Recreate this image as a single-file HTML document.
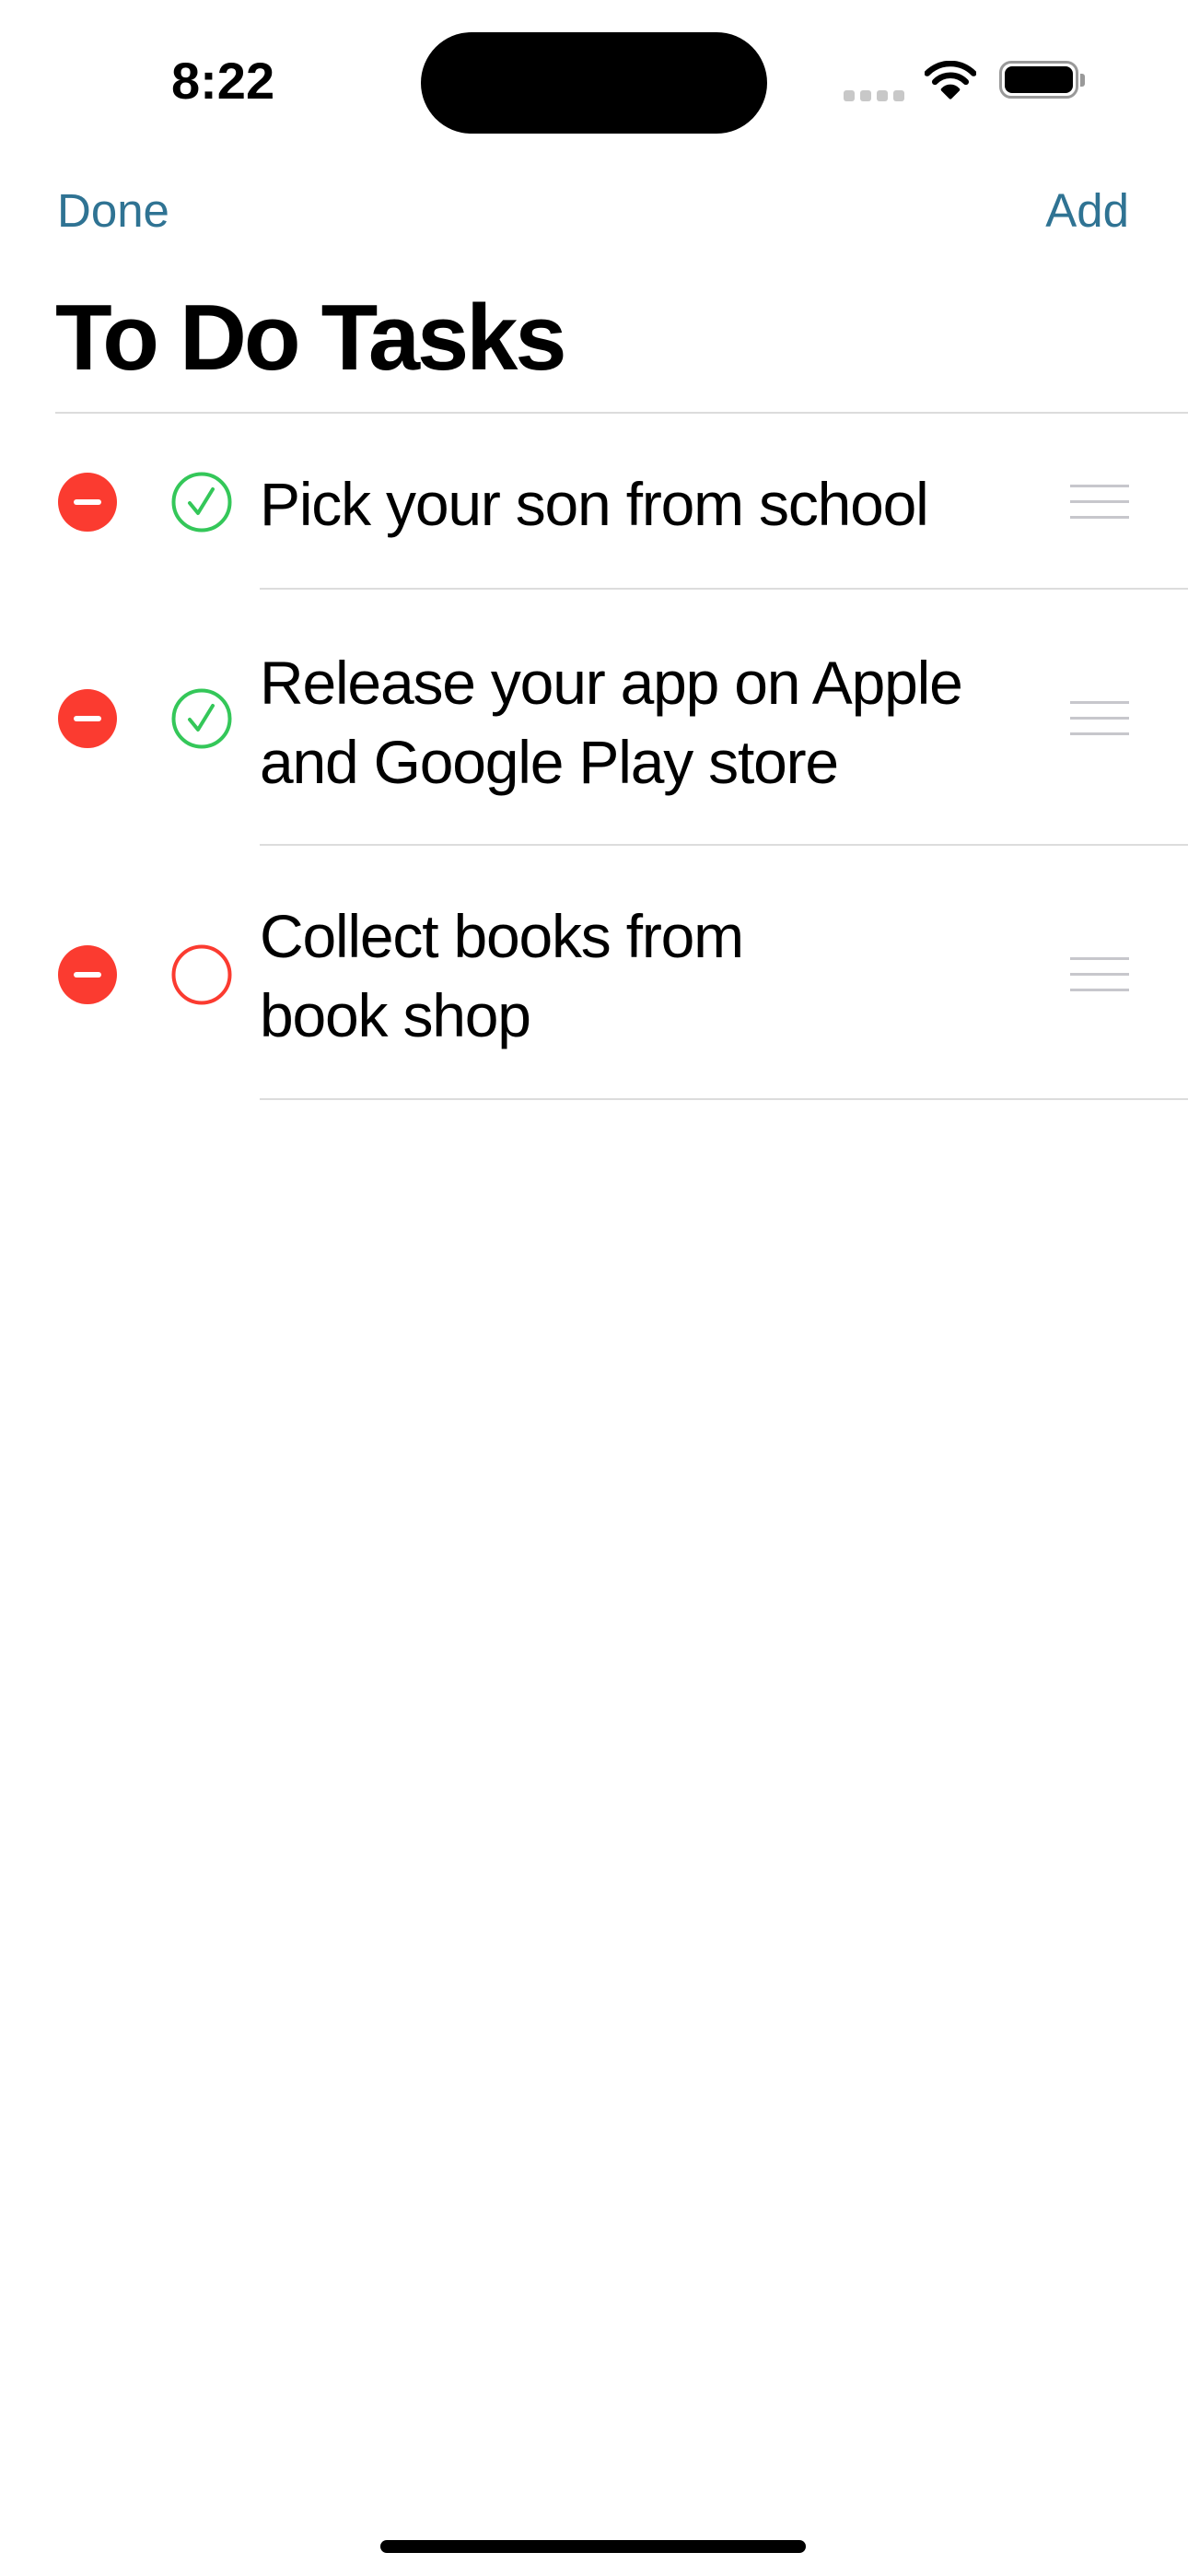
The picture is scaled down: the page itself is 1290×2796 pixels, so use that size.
<!DOCTYPE html>
<html><head><meta charset="utf-8"><style>
*{margin:0;padding:0;box-sizing:border-box}
body{width:1290px;height:2796px;background:#fff;position:relative;overflow:hidden;font-family:"Liberation Sans",sans-serif;color:#000}
.a{position:absolute}
.t{position:absolute;white-space:nowrap;line-height:1}
.sep{position:absolute;height:2px;background:#dcdcdc;right:0}
.minus{position:absolute;width:64px;height:64px;border-radius:50%;background:#fb3b30}
.minus:after{content:"";position:absolute;left:17px;top:29px;width:30px;height:6px;border-radius:3px;background:#fff}
.body{font-size:66px;letter-spacing:-1.2px}
.h{position:absolute;left:1162px;width:64px;height:3px;background:#c7c7cc}
</style></head><body>
<div class="t" style="left:186px;top:60px;font-size:56px;font-weight:bold">8:22</div>
<div class="a" style="left:457px;top:35px;width:376px;height:110px;border-radius:55px;background:#000"></div>
<div class="a" style="left:916px;top:98px;width:12px;height:12px;border-radius:3px;background:#c8c8c8"></div>
<div class="a" style="left:934px;top:98px;width:12px;height:12px;border-radius:3px;background:#c8c8c8"></div>
<div class="a" style="left:952px;top:98px;width:12px;height:12px;border-radius:3px;background:#c8c8c8"></div>
<div class="a" style="left:970px;top:98px;width:12px;height:12px;border-radius:3px;background:#c8c8c8"></div>
<svg class="a" style="left:1004px;top:66px" width="56" height="42" viewBox="0 0 60 44"><path d="M3 14 A38 38 0 0 1 57 14" stroke="#000" stroke-width="7" fill="none" stroke-linecap="round"/><path d="M12 24 A25 25 0 0 1 48 24" stroke="#000" stroke-width="7" fill="none" stroke-linecap="round"/><path d="M21 33 A12 12 0 0 1 39 33 L30 42 Z" fill="#000" stroke="#000" stroke-width="4" stroke-linejoin="round"/></svg>
<div class="a" style="left:1085px;top:66px;width:86px;height:41px;border:3px solid #999;border-radius:13px"></div>
<div class="a" style="left:1091px;top:72px;width:74px;height:29px;background:#000;border-radius:8px"></div>
<div class="a" style="left:1173px;top:80px;width:5px;height:14px;background:#999;border-radius:0 3px 3px 0"></div>
<div class="t" style="left:62px;top:203px;font-size:51px;color:#2f7393">Done</div>
<div class="t" style="right:64px;top:203px;font-size:51px;color:#2f7393">Add</div>
<div class="t" style="left:60px;top:317px;font-size:101px;font-weight:bold;letter-spacing:-3px">To Do Tasks</div>
<div class="sep" style="left:60px;top:447px"></div>

<div class="minus" style="left:63px;top:513px"></div>
<svg class="a" style="left:185px;top:511px" width="68" height="68"><circle cx="34" cy="34" r="30.5" stroke="#34c759" stroke-width="4" fill="none"/><path d="M21 35 L30 46 L46 20" stroke="#34c759" stroke-width="4" fill="none" stroke-linecap="round" stroke-linejoin="round"/></svg>
<div class="t body" style="left:282px;top:514px">Pick your son from school</div>
<div class="h" style="top:526px"></div><div class="h" style="top:543px"></div><div class="h" style="top:560px"></div>
<div class="sep" style="left:282px;top:638px"></div>

<div class="minus" style="left:63px;top:748px"></div>
<svg class="a" style="left:185px;top:746px" width="68" height="68"><circle cx="34" cy="34" r="30.5" stroke="#34c759" stroke-width="4" fill="none"/><path d="M21 35 L30 46 L46 20" stroke="#34c759" stroke-width="4" fill="none" stroke-linecap="round" stroke-linejoin="round"/></svg>
<div class="t body" style="left:282px;top:698px;line-height:86px;white-space:normal;width:900px">Release your app on Apple<br>and Google Play store</div>
<div class="h" style="top:761px"></div><div class="h" style="top:778px"></div><div class="h" style="top:795px"></div>
<div class="sep" style="left:282px;top:916px"></div>

<div class="minus" style="left:63px;top:1026px"></div>
<svg class="a" style="left:185px;top:1024px" width="68" height="68"><circle cx="34" cy="34" r="30.5" stroke="#fb3b30" stroke-width="4" fill="none"/></svg>
<div class="t body" style="left:282px;top:973px;line-height:86px;white-space:normal;width:900px">Collect books from<br>book shop</div>
<div class="h" style="top:1039px"></div><div class="h" style="top:1056px"></div><div class="h" style="top:1073px"></div>
<div class="sep" style="left:282px;top:1192px"></div>

<div class="a" style="left:413px;top:2757px;width:462px;height:14px;border-radius:7px;background:#000"></div>
</body></html>
